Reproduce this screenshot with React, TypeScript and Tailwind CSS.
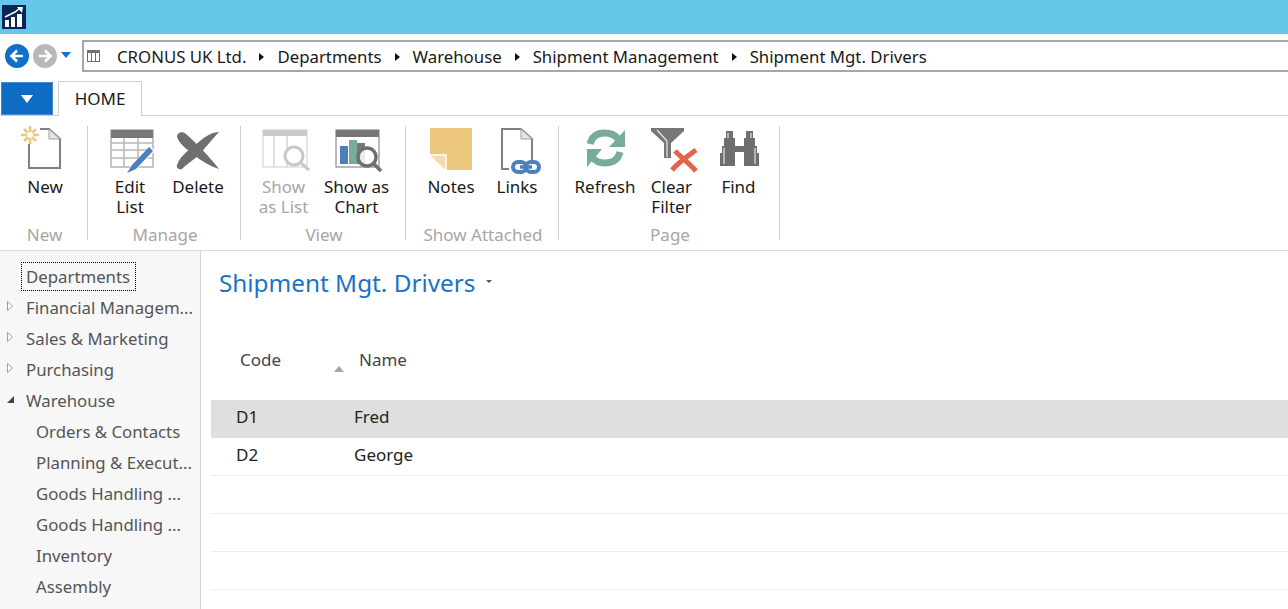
import React from 'react';

const font = "[font-family:'Noto_Sans',sans-serif]";

function Logo() {
    return (
        <svg width="24" height="24" viewBox="0 0 24 24">
            <rect width="24" height="24" fill="#0a2456" />
            <rect x="3" y="15" width="4" height="7" fill="#fff" />
            <rect x="9" y="12" width="4" height="10" fill="#fff" />
            <rect x="15" y="9" width="5" height="13" fill="#fff" />
            <path d="M3 12 L13 7 L18 3" stroke="#fff" strokeWidth="1.5" fill="none" />
            <path d="M15 2 L21 2 L20 8 Z" fill="#fff" />
        </svg>
    );
}

function NavButton({ color, dir }: { color: string; dir: 'left' | 'right' }) {
    return (
        <svg width="24" height="24" viewBox="0 0 24 24">
            <circle cx="12" cy="12" r="12" fill={color} />
            <path
                d={dir === 'left' ? 'M18 12 H7 M12 6.5 L6.5 12 L12 17.5' : 'M6 12 H17 M12 6.5 L17.5 12 L12 17.5'}
                stroke="#fff"
                strokeWidth="2.6"
                fill="none"
            />
        </svg>
    );
}

function Crumb({ children }: { children: React.ReactNode }) {
    return (
        <>
            <svg width="5" height="8" viewBox="0 0 5 8" className="mx-[13px] shrink-0">
                <path d="M0 0 L5 4 L0 8 Z" fill="#111" />
            </svg>
            <span>{children}</span>
        </>
    );
}

function IconNew() {
    return (
        <svg width="48" height="48" viewBox="0 0 48 48" className="overflow-visible">
            <path d="M19 5 H28 L39 15 V44 H8 V20" stroke="#808080" strokeWidth="2" fill="none" />
            <path d="M28 5 V15 H39 Z" fill="#e4e4e4" stroke="#a0a0a0" strokeWidth="1" />
            <path d="M9 2 V20 M0 11 H18 M3 5 L15 17 M15 5 L3 17" stroke="#edc77e" strokeWidth="2.6" />
            <circle cx="9" cy="11" r="3" fill="#fff" />
        </svg>
    );
}

function IconEditList() {
    return (
        <svg width="48" height="48" viewBox="0 0 48 48" className="overflow-visible">
            <rect x="5" y="6" width="42" height="37" fill="#fff" stroke="#8a8a8a" strokeWidth="1" />
            <path d="M5 19 H47 M5 26 H47 M5 34 H47 M18 14 V43 M32 14 V43" stroke="#b8b8b8" strokeWidth="1.5" />
            <rect x="5" y="6" width="42" height="8" fill="#777" />
            <path d="M24 43 L44 22 L49 27 L29 47 L22 50 Z" fill="#fff" />
            <path d="M26 41 L43 23 L47 27 L30 45 L21 49 Z" fill="#4a80bd" />
        </svg>
    );
}

function IconDelete() {
    return (
        <svg width="48" height="48" viewBox="0 0 48 48" className="overflow-visible">
            <path d="M3 41 C7 30 18 24 26 17 C32 12 38 8 45 8 C39 15 32 22 28 28 C21 35 13 40 8 45 C5 46 2 44 3 41 Z" fill="#6f6f6f" />
            <path d="M3 13 C3 8 9 7 12 10 C20 17 35 32 45 45 C36 42 27 37 19 30 C12 25 5 19 3 13 Z" fill="#6f6f6f" />
        </svg>
    );
}

function IconShowList() {
    return (
        <svg width="48" height="48" viewBox="0 0 48 48" className="overflow-visible">
            <rect x="3" y="6" width="44" height="37" fill="#fff" stroke="#cccccc" strokeWidth="1" />
            <path d="M14 12 V43 M27 12 V43" stroke="#d6d6d6" strokeWidth="1.5" />
            <rect x="3" y="6" width="44" height="6" fill="#cacaca" />
            <circle cx="34" cy="32" r="9" fill="#fff" stroke="#c8c8c8" strokeWidth="3" />
            <path d="M41 39 L49 46" stroke="#c8c8c8" strokeWidth="3" />
        </svg>
    );
}

function IconShowChart() {
    return (
        <svg width="48" height="48" viewBox="0 0 48 48" className="overflow-visible">
            <rect x="3" y="6" width="43" height="37" fill="#fff" stroke="#777" strokeWidth="1" />
            <rect x="3" y="6" width="43" height="7" fill="#777" />
            <rect x="7" y="22" width="8" height="18" fill="#4a80bd" />
            <rect x="16" y="16" width="8" height="24" fill="#79ab9a" />
            <rect x="24" y="19" width="8" height="21" fill="#777" />
            <circle cx="34" cy="33" r="9" fill="#fff" fillOpacity="0.85" stroke="#6f6f6f" strokeWidth="3.5" />
            <path d="M41 40 L48 47" stroke="#6f6f6f" strokeWidth="3.5" />
        </svg>
    );
}

function IconNotes() {
    return (
        <svg width="48" height="48" viewBox="0 0 48 48">
            <path d="M3 4 H45 V46 H19 L3 31 Z" fill="#edc77e" />
            <path d="M3 31 H19 V46" fill="#f4dcae" stroke="#fff" strokeWidth="1.5" />
            <path d="M3 31.5 L18.5 46 H3 Z" fill="#fff" />
        </svg>
    );
}

function IconLinks() {
    return (
        <svg width="48" height="48" viewBox="0 0 48 48" className="overflow-visible">
            <path d="M28 5 L39 15 V36 M16 45 H9 V5 H28" stroke="#808080" strokeWidth="2" fill="none" />
            <path d="M28 5 V15 H39 Z" fill="#e4e4e4" stroke="#a0a0a0" strokeWidth="1" />
            <rect x="20" y="38" width="13" height="10" rx="5" fill="none" stroke="#4a80bd" strokeWidth="4" />
            <rect x="33" y="38" width="13" height="10" rx="5" fill="none" stroke="#4a80bd" strokeWidth="4" />
            <path d="M27 43 H39" stroke="#4a80bd" strokeWidth="3.5" />
        </svg>
    );
}

function IconRefresh() {
    return (
        <svg width="48" height="48" viewBox="0 0 48 48">
            <path d="M9 20 C11 12 17 9 24 9 C30 9 34 11 37 15" stroke="#79ab9a" strokeWidth="7" fill="none" />
            <path d="M44 6 V23 H28 Z" fill="#79ab9a" />
            <path d="M39 28 C37 36 31 39 24 39 C18 39 14 37 11 33" stroke="#79ab9a" strokeWidth="7" fill="none" />
            <path d="M6 43 V25 H21 Z" fill="#79ab9a" />
        </svg>
    );
}

function IconClearFilter() {
    return (
        <svg width="48" height="48" viewBox="0 0 48 48" className="overflow-visible">
            <path d="M3 4 H36 V7 L23 19 V34 H16 V19 L3 7 Z" fill="#777" />
            <path d="M9 6 L19 17 V33" stroke="#e8e8e8" strokeWidth="1.2" fill="none" />
            <path d="M24 46 C30 39 40 32 48 26" stroke="#e0654a" strokeWidth="5" fill="none" />
            <path d="M27 27 C33 33 42 40 48 47" stroke="#e0654a" strokeWidth="5" fill="none" />
        </svg>
    );
}

function IconFind() {
    return (
        <svg width="48" height="48" viewBox="0 0 48 48">
            <path
                d="M11 7 H18 V14 H20 V22 H29 V14 H31 V7 H38 V14 H40 V22 H42 V29 H44 V42 H29 V28 H20 V42 H5 V29 H7 V22 H9 V14 H11 Z"
                fill="#6f6f6f"
            />
            <path d="M9 24 V40 M40 24 V40 M13 9 V14 M36 9 V14" stroke="#fff" strokeWidth="1" />
        </svg>
    );
}

function RibbonButton({
    icon,
    lines,
    width,
    disabled,
}: {
    icon: React.ReactNode;
    lines: string[];
    width: string;
    disabled?: boolean;
}) {
    return (
        <div className={`${width} flex flex-col items-center`}>
            <div className="h-[48px] w-[48px]">{icon}</div>
            <div className={`mt-[5px] text-center text-[17px] leading-[20px] ${disabled ? 'text-[#a6a6a6]' : 'text-[#1a1a1a]'}`}>
                {lines.map(l => (
                    <div key={l} className="whitespace-nowrap">
                        {l}
                    </div>
                ))}
            </div>
        </div>
    );
}

function RibbonGroup({
    label,
    width,
    padding,
    children,
}: {
    label: string;
    width: string;
    padding: string;
    children: React.ReactNode;
}) {
    return (
        <div className={`${width} flex h-[114px] shrink-0 flex-col border-r border-[#d0d0d0]`}>
            <div className={`${padding} flex flex-1 -mt-[2px]`}>{children}</div>
            <div className="-mb-[7px] pl-[2px] text-center text-[17px] leading-[24px] text-[#a6a6a6]">{label}</div>
        </div>
    );
}

function NavItem({ label, arrow, sub }: { label: string; arrow?: 'open' | 'closed'; sub?: boolean }) {
    return (
        <div className={`flex h-[31px] items-center text-[16.8px] text-[#555] whitespace-nowrap ${sub ? 'pl-[36px]' : 'pl-[7px]'}`}>
            {!sub && (
                <span className="flex w-[19px] shrink-0 -mt-[3px]">
                    {arrow === 'closed' && (
                        <svg width="6" height="10" viewBox="0 0 6 10">
                            <path d="M0.5 0.5 L5.5 5 L0.5 9.5 Z" fill="#fff" stroke="#a0a0a0" />
                        </svg>
                    )}
                    {arrow === 'open' && (
                        <svg width="7" height="7" viewBox="0 0 7 7">
                            <path d="M7 0 V7 H0 Z" fill="#444" />
                        </svg>
                    )}
                </span>
            )}
            {label}
        </div>
    );
}

function Row({ code, name, selected }: { code?: string; name?: string; selected?: boolean }) {
    return (
        <div className={`flex h-[38px] items-center border-b pb-[4px] text-[17px] text-[#222] ${selected ? 'border-[#dfdfdf] bg-[#dfdfdf]' : 'border-[#eeeeee]'}`}>
            <div className="w-[143px] pl-[25px]">{code}</div>
            <div>{name}</div>
        </div>
    );
}

export default function App() {
    return (
        <div className={`flex h-[609px] flex-col overflow-hidden bg-white ${font}`}>
            <div className="flex h-[34px] shrink-0 items-center bg-[#65c8ea] pl-[2px]">
                <Logo />
            </div>

            <div className="flex h-[46px] shrink-0 items-center pb-[2px]">
                <div className="ml-[5px] flex items-center gap-[4px]">
                    <NavButton color="#1070c8" dir="left" />
                    <NavButton color="#b8b8b8" dir="right" />
                </div>
                <svg width="10" height="6" viewBox="0 0 10 6" className="ml-[4px] -mt-[2px]">
                    <path d="M0 0 H10 L5 6 Z" fill="#1a73c8" />
                </svg>
                <div className="ml-[11px] flex h-[32px] flex-1 items-center border-2 border-r-0 border-[#a6a6a6] pl-[3px] text-[16.8px] text-[#1a1a1a]">
                    <svg width="13" height="12" viewBox="0 0 13 12" className="mr-[17px] shrink-0">
                        <rect x="0.5" y="0.5" width="12" height="11" fill="#fff" stroke="#707070" />
                        <rect x="0" y="0" width="13" height="3" fill="#707070" />
                        <path d="M4.5 3 V12 M8.5 3 V12" stroke="#707070" />
                    </svg>
                    <div className="flex items-center pt-[2px]">
                        <span>CRONUS UK Ltd.</span>
                        <Crumb>Departments</Crumb>
                        <Crumb>Warehouse</Crumb>
                        <Crumb>Shipment Management</Crumb>
                        <Crumb>Shipment Mgt. Drivers</Crumb>
                    </div>
                </div>
            </div>

            <div className="flex h-[36px] shrink-0 items-end border-b border-[#d0d0d0] pl-[1px]">
                <div className="mb-0 flex h-[33px] w-[52px] items-center justify-center border border-[#3d8ad6] bg-[#0f6cc4]">
                    <svg width="12" height="8" viewBox="0 0 12 8">
                        <path d="M0 0 H12 L6 8 Z" fill="#fff" />
                    </svg>
                </div>
                <div className="ml-[5px] -mb-[1px] flex h-[35px] w-[84px] items-center justify-center border border-b-0 border-[#d0d0d0] bg-white text-[17px] text-[#1a1a1a]">
                    HOME
                </div>
            </div>

            <div className="flex h-[135px] shrink-0 border-b border-[#dcdcdc] pt-[10px]">
                <RibbonGroup label="New" width="w-[88px]" padding="pl-[11px]">
                    <RibbonButton width="w-[68px]" lines={['New']} icon={<IconNew />} />
                </RibbonGroup>
                <RibbonGroup label="Manage" width="w-[153px]" padding="pl-[8px]">
                    <RibbonButton width="w-[68px]" lines={['Edit', 'List']} icon={<IconEditList />} />
                    <RibbonButton width="w-[68px]" lines={['Delete']} icon={<IconDelete />} />
                </RibbonGroup>
                <RibbonGroup label="View" width="w-[165px]" padding="pl-[6px]">
                    <RibbonButton width="w-[73px]" lines={['Show', 'as List']} icon={<IconShowList />} disabled />
                    <RibbonButton width="w-[73px]" lines={['Show as', 'Chart']} icon={<IconShowChart />} />
                </RibbonGroup>
                <RibbonGroup label="Show Attached" width="w-[153px]" padding="pl-[12px]">
                    <RibbonButton width="w-[66px]" lines={['Notes']} icon={<IconNotes />} />
                    <RibbonButton width="w-[66px]" lines={['Links']} icon={<IconLinks />} />
                </RibbonGroup>
                <RibbonGroup label="Page" width="w-[221px]" padding="pl-[13px]">
                    <RibbonButton width="w-[66px]" lines={['Refresh']} icon={<IconRefresh />} />
                    <RibbonButton width="w-[67px]" lines={['Clear', 'Filter']} icon={<IconClearFilter />} />
                    <RibbonButton width="w-[67px]" lines={['Find']} icon={<IconFind />} />
                </RibbonGroup>
            </div>

            <div className="flex min-h-0 flex-1">
                <div className="w-[201px] shrink-0 overflow-hidden border-r border-[#d4d4d4] bg-[#f7f7f7] pt-[11px]">
                    <div className="ml-[21px] mb-[1px] flex h-[29px] w-[115px] items-center border border-dotted border-black pl-[4px] text-[16.8px] text-[#555]">
                        Departments
                    </div>
                    <NavItem label="Financial Managem..." arrow="closed" />
                    <NavItem label="Sales & Marketing" arrow="closed" />
                    <NavItem label="Purchasing" arrow="closed" />
                    <NavItem label="Warehouse" arrow="open" />
                    <NavItem sub label="Orders & Contacts" />
                    <NavItem sub label="Planning & Execut..." />
                    <NavItem sub label="Goods Handling ..." />
                    <NavItem sub label="Goods Handling ..." />
                    <NavItem sub label="Inventory" />
                    <NavItem sub label="Assembly" />
                </div>

                <div className="min-w-0 flex-1 pl-[10px]">
                    <div className="flex h-[66px] items-center pb-[2px] pl-[8px] text-[24.3px] text-[#1a73c8]">
                        Shipment Mgt. Drivers
                        <svg width="6" height="3" viewBox="0 0 6 3" className="ml-[11px] -mt-[3px]">
                            <path d="M0 0 H6 L3 3 Z" fill="#555" />
                        </svg>
                    </div>
                    <div className="flex h-[83px] items-center pt-[2px] text-[17px] text-[#444]">
                        <div className="relative w-[148px] pl-[29px]">
                            Code
                            <svg width="10" height="6" viewBox="0 0 10 6" className="absolute left-[123px] top-[19px]">
                                <path d="M5 0 L10 6 H0 Z" fill="#a6a6a6" />
                            </svg>
                        </div>
                        <div>Name</div>
                    </div>
                    <Row code="D1" name="Fred" selected />
                    <Row code="D2" name="George" />
                    <Row />
                    <Row />
                    <Row />
                </div>
            </div>
        </div>
    );
}
